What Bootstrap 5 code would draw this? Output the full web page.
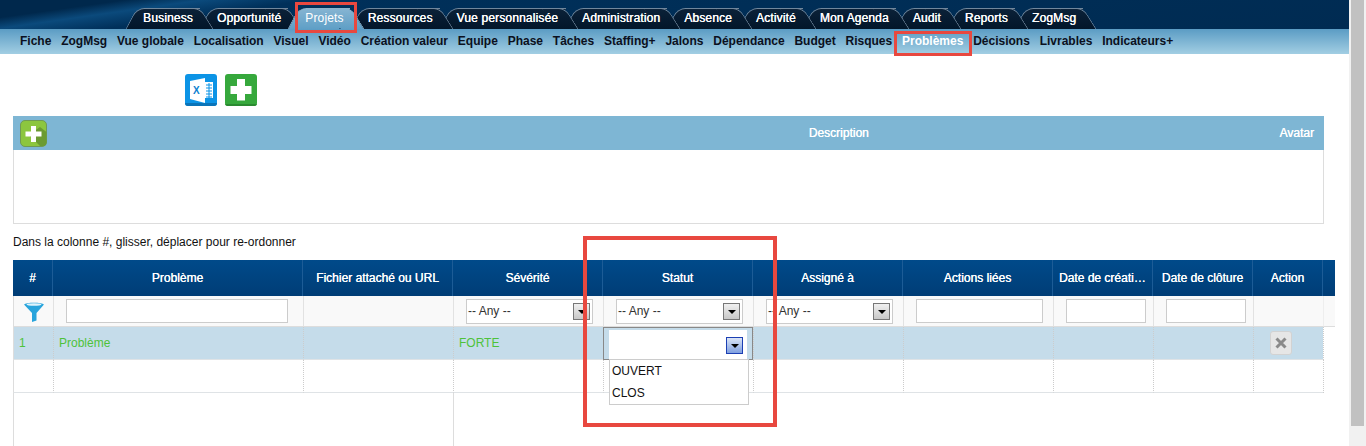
<!DOCTYPE html>
<html lang="fr">
  <head>
    <meta charset="UTF-8" />
    <meta name="viewport" content="width=device-width, initial-scale=1.0" />
    <title>Problèmes</title>
    <link
      href="https://cdn.jsdelivr.net/npm/bootstrap@5.3.2/dist/css/bootstrap.min.css"
      rel="stylesheet"
    />
    <style>
      html, body { height: 446px; overflow: hidden; }
      body { font-family: "Liberation Sans", Arial, sans-serif; font-size: 12px; color: #111; background: #fff; }
      .page-main { width: 1349px; height: 446px; overflow: hidden; }
      .fake-scroll { width: 17px; height: 446px; background: #f1f1f1; padding-left: 2px; }
      .fake-thumb { width: 13px; height: 426px; background: #c1c1c1; }

      .top-bar { height: 29px; padding: 8px 0 0 131px; background: linear-gradient(172deg, #00284c 0, #00284c 8%, #0b4a7c 13%, #00305a 20%, #002b52 100%); }
      .tab-list { height: 21px; isolation: isolate; }
      .tab-item { position: relative; padding: 0 12px; color: #fff; line-height: 21px; letter-spacing: .15px; text-shadow: .3px 0 0 #fff; white-space: nowrap; }
      .tab-item span { position: relative; z-index: 3; }
      .tab-item::before, .tab-item::after { content: ""; position: absolute; top: 0; bottom: 0; background: linear-gradient(#0b2138, #02162a); border-top: 1px solid #71879c; }
      .tab-item::before { left: 0; right: 10px; z-index: 1; border-left: 1px solid #71879c; border-radius: 8px 0 0 0; transform: skewX(-28deg); }
      .tab-item::after { right: -2px; width: 24px; z-index: 2; border-right: 1px solid #71879c; border-radius: 0 7px 0 0; transform: skewX(32deg); }
      .tab-item.tab-on { text-shadow: none; }
      .tab-item.tab-on span { z-index: 5; }
      .tab-item.tab-on::before, .tab-item.tab-on::after { z-index: 4; background: linear-gradient(#85b4d2, #5f9fc6); border-color: #8fb4cc; }

      .sub-bar { height: 25px; padding-left: 20px; gap: 9.8px; background: linear-gradient(#5b9cc4, #a2cee3); font-weight: 700; line-height: 25px; white-space: nowrap; }
      .sub-link { color: #0b1020; }
      .sub-link.sub-on { color: #fff; }

      .icon-row { padding: 20px 0 0 185px; gap: 8px; height: 52px; }
      .desc-panel { width: 1311px; height: 108px; margin: 10px 0 0 13px; border: 1px solid #ddd; border-top: 0; }
      .desc-head { height: 34px; margin: 0 -1px; background: #7eb6d4; color: #fff; padding: 0 10px 0 7px; }
      .desc-title { flex: 1; text-align: center; padding-left: 351px; text-shadow: .2px 0 0 #fff; }
      .avatar-label { text-shadow: .2px 0 0 #fff; }
      .hint-line { height: 36px; padding: 11px 0 0 13px; line-height: 14px; }

      .grid-wrap { width: 1322px; margin-left: 13px; }
      .grid-tbl { width: 1322px; table-layout: fixed; border-collapse: separate; border-spacing: 0; margin: 0; font-size: 12px; }
      .grid-tbl.table > * > * > * { padding: 0; border: 0; box-shadow: none; vertical-align: middle; }
      .grid-tbl.table .grid-head th { height: 36px; background: linear-gradient(#004a8a, #003d76); color: #fff; font-weight: 400; text-align: center; border-right: 1px solid #1d5c96; white-space: nowrap; overflow: hidden; text-overflow: ellipsis; padding: 0 6px; text-shadow: .2px 0 0 #fff; }
      .grid-tbl.table .grid-head th:last-child { border-right: 0; padding: 0; }
      .grid-tbl.table .filter-row td { height: 31px; background: #f9f9f9; border-bottom: 1px solid #ddd; border-left: 1px solid #e2e2e2; text-align: center; }
      .grid-tbl.table .filter-row td:first-child { border-left: 1px solid #ddd; }
      .grid-tbl.table .filter-row td:last-child { border-left: 1px solid #eee; }
      .grid-tbl.table .data-row td, .grid-tbl.table .blank-row td { height: 33px; border-left: 1px dotted #ccc; border-bottom: 1px solid #dfe3e6; padding-left: 5px; }
      .grid-tbl.table .data-row td { background: #c5dcea; color: #4ec23a; }
      .grid-tbl.table .data-row td:first-child, .grid-tbl.table .blank-row td:first-child { border-left: 1px solid #ddd; }
      .grid-tbl.table .data-row td.tail-cell, .grid-tbl.table .blank-row td.tail-cell { background: #fff; border-bottom: 0; padding: 0; }
      .grid-tbl.table .fill-row td { height: 60px; border-left: 1px solid #ddd; }

      .flt-input { height: 24px; display: block; margin: 0 0 1px 12px; background: #fff; border: 1px solid #ccc; border-radius: 0; padding: 0 2px; font-size: 12px; }
      .w-prob { width: 222px; }
      .w-act { width: 127px; }
      .w-date { width: 80px; }
      .flt-select { width: 127px; height: 25px; margin-left: 12px; background: #fff; border: 1px solid #ccc; padding: 0 2px 0 1px; color: #333; text-align: left; }
      .arrow-btn { width: 17px; height: 17px; border: 1px solid #777; background: linear-gradient(#f0f0f0, #c8c8c8); margin-top: 1px; }
      .arrow-btn::after { content: ""; border: 4px solid transparent; border-top: 4px solid #000; border-bottom: 0; }
      .arrow-blue { border-color: #1c3fb3; background: linear-gradient(#dbe5f6, #7f9fe0); }

      .grid-tbl.table .data-row td.edit-cell { position: relative; border: 1px solid #888; border-bottom: 1px solid #888; padding: 0; }
      .edit-box { height: 29px; margin: 2px 5px 0; background: #fff; padding: 0 4px 5px 0; }
      .edit-menu { display: block; position: absolute; top: 31px; left: 5px; width: 140px; min-width: 0; height: 46px; padding: 0; border: 1px solid #ccc; border-radius: 0; background: #fff; font-size: 12px; z-index: 5; }
      .edit-menu .dropdown-item { padding: 0 2px; height: 22px; line-height: 22px; color: #111; }

      .del-btn { width: 22px; height: 24px; background: #e6e6e6; border: 1px solid #d2d2d2; border-radius: 3px; margin-left: 11px; }

      .mark-box { position: absolute; border: 3px solid #e8483f; z-index: 10; }
      .mark-projets { left: 295px; top: 2px; width: 62px; height: 31px; }
      .mark-prob { left: 894px; top: 31px; width: 78px; height: 25px; }
      .mark-statut { left: 583px; top: 236px; width: 194px; height: 191px; border-width: 4px; }
    </style>
  </head>
  <body>
    <div class="d-flex">
      <div class="page-main position-relative">
        <!-- main tabs -->
        <div class="top-bar">
          <div class="tab-list d-flex">
            <div class="tab-item"><span>Business</span></div>
            <div class="tab-item"><span>Opportunité</span></div>
            <div class="tab-item tab-on"><span>Projets</span></div>
            <div class="tab-item"><span>Ressources</span></div>
            <div class="tab-item"><span>Vue personnalisée</span></div>
            <div class="tab-item"><span>Administration</span></div>
            <div class="tab-item"><span>Absence</span></div>
            <div class="tab-item"><span>Activité</span></div>
            <div class="tab-item"><span>Mon Agenda</span></div>
            <div class="tab-item"><span>Audit</span></div>
            <div class="tab-item"><span>Reports</span></div>
            <div class="tab-item"><span>ZogMsg</span></div>
          </div>
        </div>
        <div class="sub-bar d-flex">
          <a class="sub-link text-decoration-none">Fiche</a>
          <a class="sub-link text-decoration-none">ZogMsg</a>
          <a class="sub-link text-decoration-none">Vue globale</a>
          <a class="sub-link text-decoration-none">Localisation</a>
          <a class="sub-link text-decoration-none">Visuel</a>
          <a class="sub-link text-decoration-none">Vidéo</a>
          <a class="sub-link text-decoration-none">Création valeur</a>
          <a class="sub-link text-decoration-none">Equipe</a>
          <a class="sub-link text-decoration-none">Phase</a>
          <a class="sub-link text-decoration-none">Tâches</a>
          <a class="sub-link text-decoration-none">Staffing+</a>
          <a class="sub-link text-decoration-none">Jalons</a>
          <a class="sub-link text-decoration-none">Dépendance</a>
          <a class="sub-link text-decoration-none">Budget</a>
          <a class="sub-link text-decoration-none">Risques</a>
          <a class="sub-link sub-on text-decoration-none">Problèmes</a>
          <a class="sub-link text-decoration-none">Décisions</a>
          <a class="sub-link text-decoration-none">Livrables</a>
          <a class="sub-link text-decoration-none">Indicateurs+</a>
        </div>

        <!-- export / add -->
        <div class="icon-row d-flex">
          <svg width="32" height="32" viewBox="0 0 32 32">
            <rect width="32" height="32" rx="3" fill="#0c94e6" />
            <path d="M0 29h32v0a3 3 0 0 1-3 3H3a3 3 0 0 1-3-3z" fill="#0a74b8" />
            <path d="M5 7l15-3v25L5 25z" fill="#fff" />
            <path d="M20 8h8v16h-8z" fill="#fff" />
            <path d="M21 11h6M21 14h6M21 17h6M21 20h6M21 23h6M24 9v15" stroke="#0c94e6" stroke-width="1" fill="none" />
            <text x="8" y="20" font-family="Liberation Sans" font-size="10" font-weight="700" fill="#0c7fd0">X</text>
          </svg>
          <svg width="32" height="32" viewBox="0 0 32 32">
            <rect width="32" height="32" rx="3" fill="#36a83c" />
            <path d="M0 30h32a3 3 0 0 1-3 2H3a3 3 0 0 1-3-2z" fill="#2a8a30" />
            <path d="M12 5h8v7h6.500v8H20v6.500h-8V20H5.500v-8H12z" fill="#fff" />
          </svg>
        </div>

        <!-- descriptions -->
        <div class="desc-panel">
          <div class="desc-head d-flex align-items-center">
            <svg width="27" height="27" viewBox="0 0 27 27">
              <rect x=".5" y=".5" width="26" height="26" rx="4.500" fill="#8cc63f" stroke="#6f9a55" />
              <path d="M9 15l11 11h3a3.500 3.500 0 0 0 3.500-3.500V12L20 7z" fill="#6b9b32" />
              <path d="M11 6h5v5.500h5.500v5H16V22h-5v-5.500H5.500v-5H11z" fill="#fff" />
            </svg>
            <div class="desc-title">Description</div>
            <div class="avatar-label">Avatar</div>
          </div>
        </div>
        <div class="hint-line">Dans la colonne #, glisser, déplacer pour re-ordonner</div>

        <!-- issues grid -->
        <div class="grid-wrap">
          <table class="table grid-tbl">
            <colgroup>
              <col style="width: 40px" /><col style="width: 250px" /><col style="width: 150px" />
              <col style="width: 150px" /><col style="width: 150px" /><col style="width: 150px" />
              <col style="width: 150px" /><col style="width: 100px" /><col style="width: 100px" />
              <col style="width: 70px" /><col style="width: 12px" />
            </colgroup>
            <thead>
              <tr class="grid-head">
                <th>#</th>
                <th>Problème</th>
                <th>Fichier attaché ou URL</th>
                <th>Sévérité</th>
                <th>Statut</th>
                <th>Assigné à</th>
                <th>Actions liées</th>
                <th>Date de création</th>
                <th>Date de clôture</th>
                <th>Action</th>
                <th></th>
              </tr>
            </thead>
            <tbody>
              <tr class="filter-row">
                <td>
                  <svg width="20" height="21" viewBox="0 0 20 21" class="d-block mx-auto">
                    <path d="M0 3.500C2 1 18 1 20 3.500L12.500 12v7.500L8 21v-9z" fill="#28a4dc" />
                    <ellipse cx="10" cy="3.500" rx="7.500" ry="1.300" fill="#dff3fb" />
                  </svg>
                </td>
                <td><input class="flt-input w-prob" type="text" /></td>
                <td></td>
                <td>
                  <div class="flt-select d-flex justify-content-between align-items-center">-- Any --<span class="arrow-btn d-flex align-items-center justify-content-center"></span></div>
                </td>
                <td>
                  <div class="flt-select d-flex justify-content-between align-items-center">-- Any --<span class="arrow-btn d-flex align-items-center justify-content-center"></span></div>
                </td>
                <td>
                  <div class="flt-select d-flex justify-content-between align-items-center">-- Any --<span class="arrow-btn d-flex align-items-center justify-content-center"></span></div>
                </td>
                <td><input class="flt-input w-act" type="text" /></td>
                <td><input class="flt-input w-date" type="text" /></td>
                <td><input class="flt-input w-date" type="text" /></td>
                <td></td>
                <td></td>
              </tr>
              <tr class="data-row">
                <td>1</td>
                <td>Problème</td>
                <td></td>
                <td>FORTE</td>
                <td class="edit-cell">
                  <div class="edit-box d-flex justify-content-end align-items-end">
                    <span class="arrow-btn arrow-blue d-flex align-items-center justify-content-center"></span>
                  </div>
                  <div class="dropdown-menu edit-menu">
                    <a class="dropdown-item">OUVERT</a>
                    <a class="dropdown-item">CLOS</a>
                  </div>
                </td>
                <td></td>
                <td></td>
                <td></td>
                <td></td>
                <td>
                  <button type="button" class="del-btn d-flex align-items-center justify-content-center p-0">
                    <svg width="12" height="12" viewBox="0 0 12 12"><path d="M1.500 1.500l9 9M10.500 1.500l-9 9" stroke="#8a8a8a" stroke-width="3" /></svg>
                  </button>
                </td>
                <td class="tail-cell"></td>
              </tr>
              <tr class="blank-row">
                <td></td><td></td><td></td><td></td><td></td><td></td><td></td><td></td><td></td><td></td>
                <td class="tail-cell"></td>
              </tr>
              <tr class="fill-row">
                <td colspan="3"></td>
                <td colspan="8"></td>
              </tr>
            </tbody>
          </table>
        </div>

        <!-- annotations drawn over the page -->
        <div class="mark-box mark-projets"></div>
        <div class="mark-box mark-prob"></div>
        <div class="mark-box mark-statut"></div>
      </div>
      <div class="fake-scroll"><div class="fake-thumb"></div></div>
    </div>

    <script src="https://cdn.jsdelivr.net/npm/bootstrap@5.3.2/dist/js/bootstrap.bundle.min.js"></script>
  </body>
</html>
